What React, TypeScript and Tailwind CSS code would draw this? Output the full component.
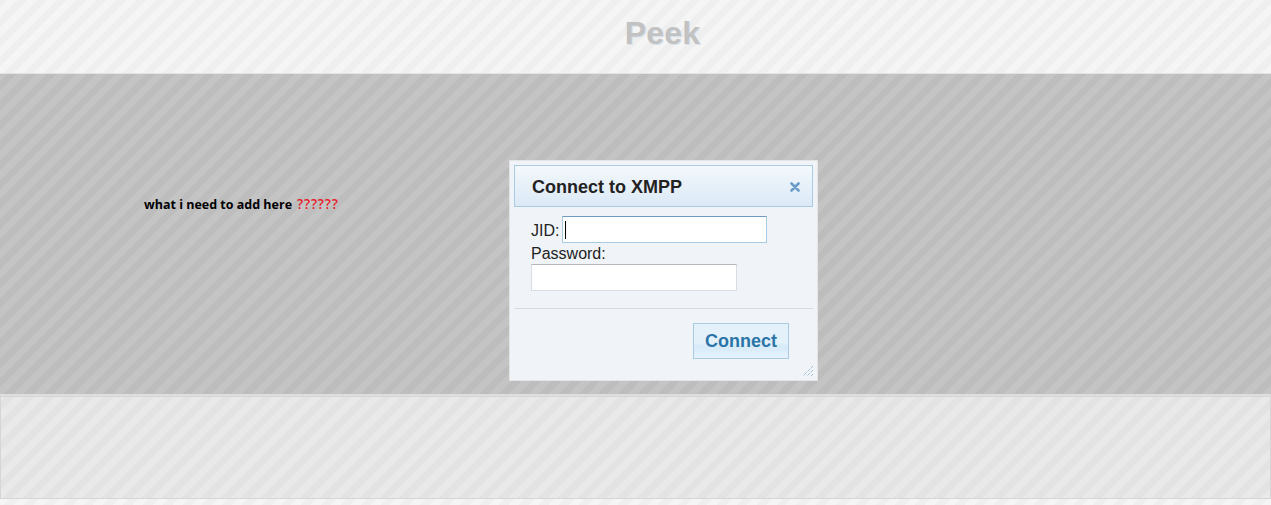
import React from "react";

export default function App() {
  return (
    <div className="w-[1271px] h-[505px] overflow-hidden flex flex-col" style={{ fontFamily: '"Liberation Sans", Arial, sans-serif' }}>
      {/* Header */}
      <div className="h-[74px] shrink-0 border-b border-[#e3e3e3] bg-[repeating-linear-gradient(-45deg,#f5f5f5_0px,#f5f5f5_7px,#efefef_7px,#efefef_14px)] flex items-center justify-center">
        <div className="pl-[54px] pb-[7px] text-[32px] font-bold text-[#c2c2c2] tracking-[0.2px] [text-shadow:1px_1px_0_#d8e2ec]">Peek</div>
      </div>

      {/* Middle */}
      <div className="h-[320px] shrink-0 bg-[repeating-linear-gradient(-45deg,#c4c4c4_0px,#c4c4c4_7px,#bdbdbd_7px,#bdbdbd_14px)] pt-[86px] grid grid-cols-[509px_309px]">
        <div className="pl-[144px] pt-[38px] text-[12.5px] leading-none" style={{ fontFamily: '"Open Sans", "Noto Sans", sans-serif' }}>
          <span className="font-bold text-black">what i need to add here</span>
          <span className="ml-[5px] text-[13.5px] text-[#e8202a] font-semibold tracking-[0.8px]">??????</span>
        </div>

        {/* Dialog */}
        <div className="relative w-[309px] h-[221px] border border-[#e4e4e4] bg-[#f0f4f8] p-[4px] flex flex-col">
          <div className="h-[42px] border border-[#a9cbe4] bg-[linear-gradient(#f3f8fc,#dbe9f6)] flex items-center justify-between pl-[17px] pr-[12px] pt-[2px]">
            <span className="text-[18px] font-bold text-[#222]">Connect to XMPP</span>
            <svg width="10" height="10" viewBox="0 0 10 10">
              <path d="M1.5 1.5 L8.5 8.5 M8.5 1.5 L1.5 8.5" stroke="#6a9ccb" strokeWidth="2.6" strokeLinecap="round" />
            </svg>
          </div>

          <div className="pl-[17px] pt-[9px] text-[16px] text-[#222] leading-none">
            <div className="flex items-center">
              <span className="pt-[2px] pr-[2px]">JID:</span>
              <div className="ml-[1px] w-[205px] h-[27px] bg-white border border-[#a9cce6] border-t-[#6f9cc4] relative">
                <div className="absolute left-[2px] top-[4px] w-[1px] h-[18px] bg-black" />
              </div>
            </div>
            <div className="mt-[3px]">Password:</div>
            <div className="mt-[2px] w-[206px] h-[27px] bg-white border border-[#d8dde2] border-t-[#b4b8bc]" />
          </div>

          <div className="mt-[17px] border-t border-[#dadada]" />

          <div className="flex justify-end pr-[24px] pt-[14px]">
            <button className="w-[96px] h-[36px] border border-[#a9cce6] bg-[linear-gradient(#e4f1fb_0%,#e4f1fb_55%,#d6eaf9_65%,#e6f2fb_100%)] text-[18px] font-bold text-[#2a74a8]">
              Connect
            </button>
          </div>

          <svg width="12" height="12" viewBox="0 0 12 12" className="absolute right-[3px] bottom-[3px]">
            <path d="M11 1 L1 11 M11 5 L5 11 M11 9 L9 11" stroke="#7ea3c4" strokeWidth="1" strokeDasharray="1 1" />
          </svg>
        </div>
      </div>

      {/* Bottom */}
      <div className="h-[2px] shrink-0 bg-[#dedede]" />
      <div className="h-[103px] shrink-0 border border-[#d6d6d6] bg-[repeating-linear-gradient(-45deg,#e9e9e9_0px,#e9e9e9_7px,#e3e3e3_7px,#e3e3e3_14px)]" />
      <div className="flex-1 bg-[repeating-linear-gradient(-45deg,#f5f5f5_0px,#f5f5f5_7px,#efefef_7px,#efefef_14px)]" />
    </div>
  );
}
